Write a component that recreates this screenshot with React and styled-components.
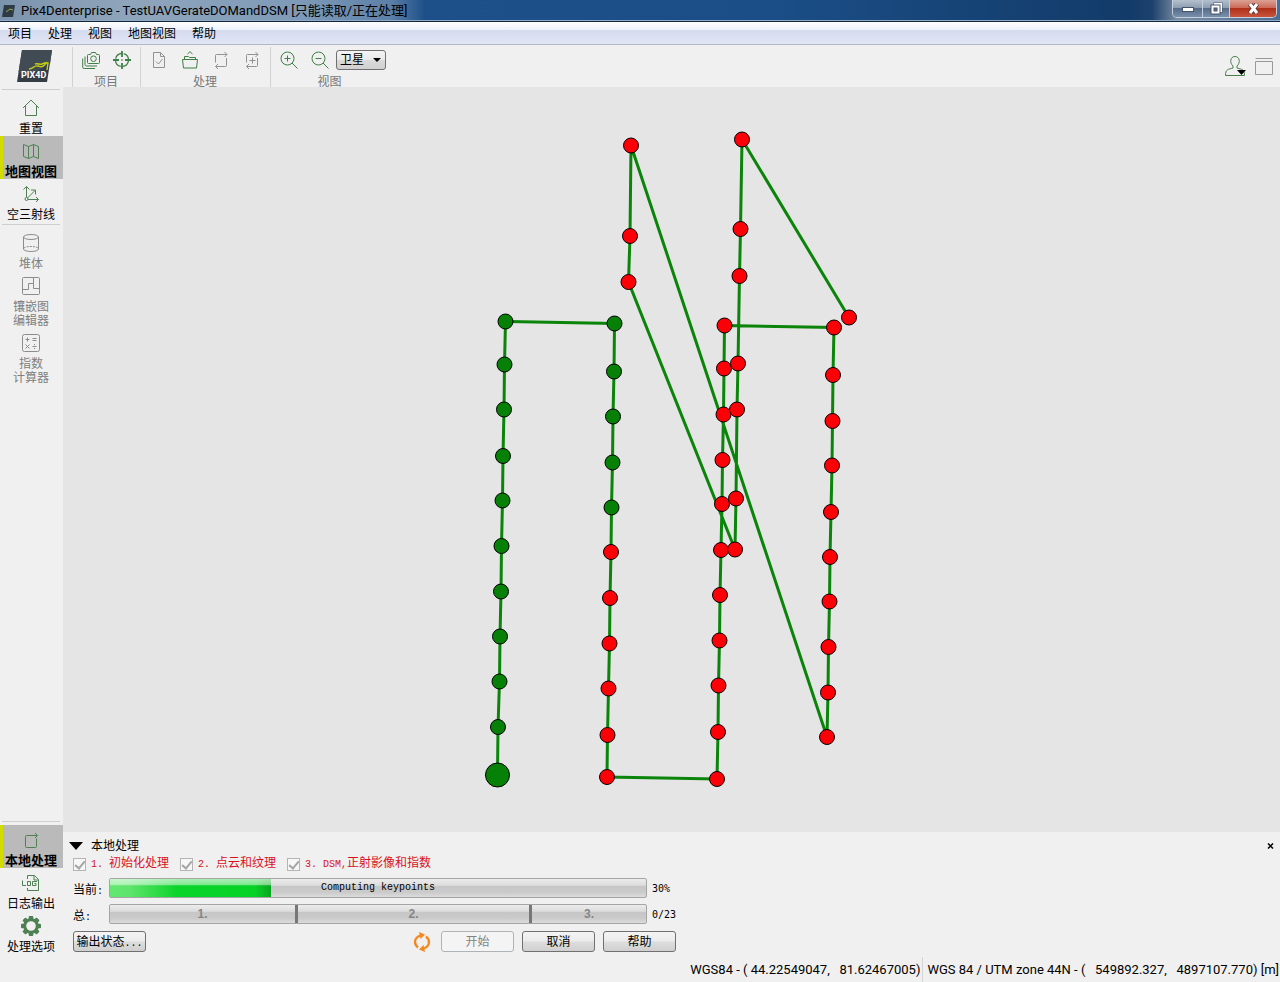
import React from "react";
import styled, { createGlobalStyle, css } from "styled-components";

const uiFont = css`
  font-family: Roboto, "Noto Sans CJK SC", sans-serif;
  font-size: 13px;
`;

const GlobalStyle = createGlobalStyle`
  * {
    box-sizing: border-box;
  }

  body {
    margin: 0;
    background: #f0f0f0;
    color: #000;
    font-family: "Liberation Sans", "Noto Sans CJK SC", sans-serif;
    font-size: 12px;
  }

  button, select, input {
    font: inherit;
    color: inherit;
    margin: 0;
  }
`;

const Window = styled.div`
  display: flex;
  flex-direction: column;
  height: 100vh;
`;

/* title bar */

const TitleBar = styled.header`
  display: flex;
  align-items: center;
  height: 22px;
  flex: none;
  padding: 0 3px 0 2px;
  gap: 6px;
  border-bottom: 1px solid #14263c;
  box-shadow: inset 0 -1px 0 #8fa9c6;
  background: linear-gradient(90deg, #7b93ad 0, #8fa5bb 130px, #7e9ab8 300px, #5d80a8 390px, #1d5088 425px, #1b4e87 60%, #123b69 88%, #1c416c 90%, #7b8da2 92%, #4b6c92 100%);
`;

const Title = styled.h1`
  ${uiFont}
  flex: 1;
  margin: 0;
  font-weight: 400;
  line-height: 20px;
  white-space: nowrap;
`;

const WindowButtons = styled.div`
  display: flex;
  align-self: flex-start;
  height: 18px;
  border: 1px solid #c4d0dd;
  border-top: 0;
  border-radius: 0 0 5px 5px;
  overflow: hidden;
`;

const WindowButton = styled.button`
  display: flex;
  align-items: center;
  justify-content: center;
  width: ${props => props.$width}px;
  padding: 0;
  border: 0;
  border-left: ${props => props.$first ? "0" : "1px solid #c4d0dd"};
  background: ${props => props.$close
    ? "linear-gradient(#dba193 0, #cb6a58 45%, #b02f19 50%, #c9553c 100%)"
    : "linear-gradient(#b5c0cd 0, #8e9eb1 45%, #566c88 50%, #7990ac 100%)"};
`;

/* menu bar */

const MenuBar = styled.nav`
  display: flex;
  align-items: center;
  flex: none;
  height: 23px;
  padding-top: 2px;
  border-bottom: 1px solid #b3b8c6;
  background: linear-gradient(#fdfeff 0, #eef2fa 34%, #d5dcef 38%, #e1e6f5 100%);
`;

const MenuItem = styled.button`
  padding: 0 8px;
  border: 0;
  background: none;
  line-height: 20px;
`;

/* toolbar */

const ToolBar = styled.div`
  display: flex;
  flex: none;
  height: 42px;
`;

const LogoBox = styled.div`
  width: 72px;
  padding: 5px 0 0 16px;
`;

const ToolGroup = styled.section`
  display: flex;
  flex-direction: column;
  align-items: center;
  gap: 5px;
  height: 40px;
  margin-top: 2px;
  padding: 3px 3px 0 2px;
  border-left: 1px solid #d2d2d2;
`;

const ToolRow = styled.div`
  display: flex;
  align-items: center;
  height: 20px;
`;

const ToolButton = styled.button`
  display: flex;
  align-items: center;
  justify-content: center;
  width: 31px;
  height: 20px;
  padding: 0 0 0 1px;
  border: 0;
  background: none;
  color: ${props => props.disabled ? "#929292" : "#3f7f45"};
`;

const GroupLabel = styled.span`
  color: #777;
  line-height: 14px;
`;

const MapSelect = styled.select`
  appearance: none;
  width: 50px;
  height: 20px;
  margin-left: 1px;
  padding: 0 3px;
  border: 1px solid #707070;
  border-radius: 3px;
  background:
    url("data:image/svg+xml,%3Csvg xmlns='http://www.w3.org/2000/svg' width='8' height='4'%3E%3Cpath d='M0 0h8L4 4z'/%3E%3C/svg%3E") no-repeat right 4px center,
    linear-gradient(#f4f4f4, #e9e9e9 50%, #dadada 52%, #d0d0d0);
`;

const AccountTools = styled.div`
  display: flex;
  align-items: center;
  gap: 8px;
  margin-left: auto;
  padding-right: 6px;
`;

const PlainButton = styled.button`
  display: flex;
  padding: 0;
  border: 0;
  background: none;
`;

/* side bar */

const Body = styled.div`
  display: flex;
  flex: 1;
  min-height: 0;
`;

const SideBar = styled.aside`
  display: flex;
  flex-direction: column;
  flex: none;
  width: 63px;
  padding-bottom: 3px;
`;

const Separator = styled.hr`
  width: 58px;
  height: 1px;
  margin: 2px 2px 3px;
  border: 0;
  background: #cfcfcf;
`;

const SideSpacer = styled.div`
  flex: 1;
`;

const SideItem = styled.button`
  display: flex;
  flex-direction: column;
  align-items: center;
  gap: 5px;
  padding: 6px 1px 0 0;
  border: 0;
  background: none;
  line-height: 14px;
  white-space: pre-line;
  color: ${props => props.disabled ? "#808080" : "#000"};

  svg {
    color: ${props => props.disabled ? "#8c8c8c" : "#4d8052"};
  }

  ${props => props.$active && css`
    background: linear-gradient(90deg, #d3dc00 3px, #bababa 3px);
    font-size: 13px;
    font-weight: 700;
  `}
`;

/* map and processing panel */

const Main = styled.main`
  display: flex;
  flex-direction: column;
  flex: 1;
  min-width: 0;
`;

const MapView = styled.div`
  flex: 1;
  min-height: 0;
  background: #e5e5e5;

  svg {
    display: block;
    width: 100%;
    height: 100%;
  }
`;

const Panel = styled.section`
  flex: none;
  padding: 6px 6px 5px;
`;

const PanelHeader = styled.div`
  display: flex;
  align-items: center;
  justify-content: space-between;
  height: 16px;
`;

const PanelTitle = styled.button`
  display: flex;
  align-items: center;
  gap: 8px;
  padding: 0;
  border: 0;
  background: none;
  line-height: 16px;
`;

const PanelContent = styled.div`
  max-width: 608px;
  padding-left: 4px;
`;

const Steps = styled.div`
  display: flex;
  gap: 11px;
  height: 14px;
  margin: 3px 0 7px;
`;

const Step = styled.label`
  display: flex;
  align-items: center;
  gap: 5px;
  color: #d8121c;
  line-height: 16px;
  white-space: pre;
`;

const Check = styled.input`
  appearance: none;
  display: grid;
  place-items: center;
  width: 13px;
  height: 13px;
  border: 1px solid #b4b4b4;
  background: #f7f7f7;

  &:checked::after {
    content: "";
    width: 4px;
    height: 8px;
    margin-bottom: 2px;
    border: solid #a5a5a5;
    border-width: 0 2px 2px 0;
    transform: rotate(40deg);
  }
`;

/* half-width latin beside 12px chinese glyphs */
const Mono = styled.span`
  font-family: "Liberation Mono", monospace;
  font-size: 10px;
`;

const ProgressRow = styled.div`
  display: grid;
  grid-template-columns: 36px 1fr 30px;
  align-items: center;
  height: 20px;
  margin-bottom: 6px;
  white-space: nowrap;
`;

const Bar = styled.div`
  display: grid;
  height: 20px;
  border: 1px solid #a5a5a5;
  border-radius: 2px;
  background: linear-gradient(#ececec 0, #dcdcdc 35%, #c6c6c6 42%, #cbcbcb 75%, #dcdcdc 100%);
`;

const BarFill = styled.div`
  grid-area: 1 / 1;
  background:
    linear-gradient(rgba(255, 255, 255, .65) 0, rgba(255, 255, 255, .5) 30%, transparent 38%),
    linear-gradient(90deg, #62e870 0, #5fe46d 12%, #0ad42a 42%, #06d226 90%, #08a51e 100%);
`;

const BarText = styled(Mono)`
  grid-area: 1 / 1;
  text-align: center;
  line-height: 18px;
`;

const SegmentBar = styled(Bar)`
  grid-template-columns: 188fr 234fr 114fr;
`;

const Segment = styled.span`
  border-right: ${props => props.$last ? "0" : "3px solid #777"};
  color: #858585;
  font-size: 12px;
  font-weight: 700;
  line-height: 18px;
  text-align: center;
`;

const BarValue = styled.span`
  padding-left: 5px;
  font-family: "DejaVu Sans Mono", monospace;
  font-size: 10px;
`;

const ButtonRow = styled.div`
  display: flex;
  align-items: center;
  gap: 8px;
  margin-top: 7px;
  padding-right: 1px;
`;

const Button = styled.button`
  width: 73px;
  height: 21px;
  padding: 1px 0 0;
  border: 1px solid #707070;
  border-radius: 3px;
  background: linear-gradient(#f4f4f4, #ebebeb 48%, #dddddd 52%, #d0d0d0);
  line-height: 18px;
  white-space: nowrap;

  &:disabled {
    border-color: #b0b3b5;
    background: #f4f4f4;
    color: #838383;
  }
`;

const Spinner = styled.span`
  display: flex;
  margin-left: auto;
  margin-right: 2px;
`;

const StatusBar = styled.footer`
  ${uiFont}
  display: flex;
  justify-content: flex-end;
  flex: none;
  height: 25px;
  padding-right: 1px;
  line-height: 25px;
  white-space: pre;
`;

const StatusItem = styled.span`
  & + & {
    margin-left: 2px;
    padding-left: 4px;
    border-left: 1px solid #d4d4d4;
  }
`;

const Icon = ({ children, size = 18 }) => (
  <svg width={size} height={size} viewBox="0 0 18 18" fill="none" stroke="currentColor" aria-hidden="true">
    {children}
  </svg>
);

const icons = {
  cameras: (
    <>
      <path d="M6.5 3.5h2l1-2h4l1 2h2q1 0 1 1v7q0 1-1 1h-10q-1 0-1-1v-7q0-1 1-1z" />
      <circle cx="11.5" cy="7.7" r="2.8" />
      <path d="M3 5.5v8q0 1.5 1.5 1.5H15M.7 7.5V16q0 1.5 1.5 1.5H13" />
    </>
  ),
  target: (
    <>
      <circle cx="9" cy="9" r="6.5" strokeDasharray="8.2 2" strokeDashoffset="-1" strokeWidth="1.3" />
      <path d="M9 0v6M9 12v6M0 9h6M12 9h6" strokeWidth="1.8" />
      <path d="M8 9h2" />
    </>
  ),
  fileCheck: <path d="M3.5 1.5h7l4 4v11h-11zM10.5 1.5v4h4M6 10.5l2.5 2.5 4-5" />,
  openBox: <path d="M1.5 8.5h15l-1 8.5h-13zM3.5 8V5.5h4l1 1h6V8M6.5 3L9 .7 11.5 3" />,
  loop: <path d="M3.5 11.5v-7q0-1 1-1H15M12.5 1l2.5 2.5L12.5 6M14.5 7v7.5q0 1-1 1H3.5M6 13l-2.5 2.5L6 18" />,
  loopPlus: <path d="M3.5 11.5v-7q0-1 1-1H15M12.5 1l2.5 2.5L12.5 6M14.5 7v7.5q0 1-1 1H3.5M6 13l-2.5 2.5L6 18M9.5 6.5v6M6.5 9.5h6" />,
  zoomIn: (
    <>
      <circle cx="7.5" cy="7.5" r="6.5" />
      <path d="M12 12l5.5 5.5M4.5 7.5h6M7.5 4.5v6" />
    </>
  ),
  zoomOut: (
    <>
      <circle cx="7.5" cy="7.5" r="6.5" />
      <path d="M12 12l5.5 5.5M4.5 7.5h6" />
    </>
  ),
  home: <path d="M1 9L9 1l8 8M3.5 7v9.5h11V7" />,
  map: <path d="M1.5 2.5l5 2 5-2 5 2v12l-5-2-5 2-5-2zM6.5 4.5v12M11.5 2.5v12" />,
  rays: (
    <>
      <circle cx="4.5" cy="14" r="1.5" />
      <path d="M4.5 12.5V1.5M1.5 4.5l3-3 3 3M6 14.5h10.5M14 12l2.5 2.5-2.5 2.5M5.5 13l7.5-7.5M9 5h4.5v4.5" />
    </>
  ),
  volume: (
    <>
      <ellipse cx="9" cy="3" rx="7.5" ry="2.5" />
      <path d="M1.5 3v12c0 3.3 15 3.3 15 0V3" />
      <path d="M2 14c2-2 12-2 14 0" strokeDasharray="2 1" />
    </>
  ),
  mosaic: <path d="M1.5.5h15q1 0 1 1v15q0 1-1 1h-15q-1 0-1-1v-15q0-1 1-1zM.5 12.5h6v-6h5V.5M11.5 6.5v5h6" />,
  calculator: (
    <>
      <rect x=".5" y=".5" width="17" height="17" rx="2" />
      <path d="M3.5 5.5h4M5.5 3.5v4M10.5 4.5h4M10.5 6.5h4M3.5 10.5l4 4M7.5 10.5l-4 4M10.5 12.5h4M12.5 10v1M12.5 14v1" />
    </>
  ),
  local: <path d="M10.5 4.5h-6q-1 0-1 1v10q0 1 1 1h9q1 0 1-1v-8M8 4.5h7.5M13 2l2.5 2.5L13 7" />,
  log: (
    <>
      <path d="M5.5 5V1.5h7l4 4v11h-11V14M12 1.5v4.5h4.5" />
      <path d="M.5 6.5v5h3.5M5.5 7.5h3v4h-3zM15 7.5h-4.5v4H14v-2h-1.5" />
    </>
  ),
};

const Gear = () => (
  <svg width="20" height="18" viewBox="-9 -9 18 18" overflow="visible" aria-hidden="true">
    {[0, 45, 90, 135].map(angle => (
      <rect key={angle} x="-2.3" y="-10" width="4.6" height="20" rx="1" fill="currentColor" transform={`rotate(${angle})`} />
    ))}
    <circle r="6.3" fill="#f0f0f0" stroke="currentColor" strokeWidth="3" />
  </svg>
);

const Logo = () => (
  <svg width="37" height="33" viewBox="0 0 37 33" aria-label="Pix4D">
    <path d="M6 0h30l-5 32H1z" fill="#343d46" />
    <path d="M6 0h30l-2 14L12 26 2.5 22z" fill="#414b54" />
    <path d="M13 19c4 0 5-4 9-3s4 2 9-4M19 14c3-1 5 1 7 0s3-2 6-1l-1 7" stroke="#c5cf10" strokeWidth="1.4" fill="none" />
    <text x="5" y="28" fill="#fff" fontFamily="Roboto, sans-serif" fontSize="9" fontWeight="700">PIX4D</text>
  </svg>
);

const AppIcon = () => (
  <svg width="13" height="14" viewBox="0 0 13 14" aria-hidden="true">
    <path d="M2 1h11l-2 12H0z" fill="#2d3b45" />
    <path d="M4 8l4-3 3 1" stroke="#9da955" fill="none" />
  </svg>
);

const UserIcon = () => (
  <svg width="22" height="22" viewBox="0 0 22 22" fill="none" aria-hidden="true">
    <path d="M8 13v-2C4.5 8 5 1.5 10 1.5S15.5 8 12 11v2c5 1.5 7.5 1 7.5 7.5H.5C.5 14 3 14.5 8 13z" stroke="#4a7d4e" />
    <path d="M12 15h9l-4.5 5z" fill="#000" />
  </svg>
);

const LayoutIcon = () => (
  <svg width="19" height="19" viewBox="0 0 19 19" fill="none" stroke="#999" aria-hidden="true">
    <path d="M.5 1.5h17M.5 4.5h17v13H.5z" />
  </svg>
);

const SyncIcon = () => (
  <svg width="18" height="20" viewBox="0 0 18 20" fill="none" stroke="#f5871f" strokeWidth="2.3" aria-hidden="true">
    <path d="M5 15.5C.5 12 1 6 7 3.5M13 4.5c4.5 3.5 4 9.5-2 12" />
    <path d="M6 0l6 2.5L7.5 7zM12 20l-6-2.5L10.5 13z" fill="#f5871f" stroke="none" />
  </svg>
);

// flight order of the images, [x, y, calibrated]
const images = [
  [497.5, 775, 1], [498, 727, 1], [499.5, 681.5, 1], [500, 636.5, 1], [501, 591.5, 1], [501.5, 546, 1],
  [502.5, 500.5, 1], [503, 456, 1], [504, 409.5, 1], [504.5, 364.5, 1], [505.5, 321.5, 1],
  [614.5, 323.5, 1], [614, 371.5, 1], [613, 416.5, 1], [612.5, 462.5, 1], [611.5, 507.5, 1],
  [611, 552], [610, 598], [609.5, 643.5], [608.5, 688.5], [607.5, 735], [607, 777],
  [717, 779], [718, 732], [718.5, 685.5], [719.5, 640.5], [720, 595], [721, 550], [722, 504],
  [722.5, 460], [723.5, 414.5], [724, 368.5], [724.5, 325.5],
  [834, 327.5], [833, 375], [832.5, 421], [832, 465.5], [831, 512], [830, 557], [829.5, 601.5],
  [828.5, 647], [828, 692.5], [827, 737],
  [631, 145.5], [630, 236], [628.5, 282],
  [735, 549.5], [736, 498.5], [737, 409.5], [738, 363.5], [739.5, 276], [740.5, 229], [742, 139.5],
  [849, 317.5],
];

const FlightMap = () => (
  <svg viewBox="63 87 1217 745" role="img" aria-label="地图视图">
    <polyline points={images.map(([x, y]) => `${x},${y}`).join(" ")} fill="none" stroke="#0a850a" strokeWidth="3" />
    {images.map(([x, y, calibrated], i) => (
      <circle key={i} cx={x} cy={y} r={i === 0 ? 12 : 7.5} fill={calibrated ? "#068006" : "#fb0007"} stroke="#000" strokeWidth="1" />
    ))}
  </svg>
);

const steps = [
  ["1. ", "初始化处理"],
  ["2. ", "点云和纹理"],
  ["3. DSM,", "正射影像和指数"],
];

export default function App() {
  const progress = 30;

  return (
    <Window>
      <GlobalStyle />
      <TitleBar>
        <AppIcon />
        <Title>Pix4Denterprise - TestUAVGerateDOMandDSM [只能读取/正在处理]</Title>
        <WindowButtons>
          <WindowButton $width={29} $first aria-label="最小化">
            <svg width="12" height="6"><rect x=".5" y="1.5" width="11" height="4" fill="#fff" stroke="#46546a" /></svg>
          </WindowButton>
          <WindowButton $width={27} aria-label="还原">
            <svg width="13" height="13" fill="none">
              <path d="M5 3V2h6v7h-1" stroke="#46546a" strokeWidth="3" />
              <path d="M5 3V2h6v7h-1" stroke="#fff" strokeWidth="2" />
              <rect x="2.5" y="4.5" width="6" height="6" stroke="#46546a" strokeWidth="4" />
              <rect x="2.5" y="4.5" width="6" height="6" stroke="#fff" strokeWidth="2" />
            </svg>
          </WindowButton>
          <WindowButton $width={47} $close aria-label="关闭">
            <svg width="13" height="11" fill="none">
              <path d="M3 1l7 9M10 1l-7 9" stroke="#5c3a3a" strokeWidth="5" />
              <path d="M3 1l7 9M10 1l-7 9" stroke="#fff" strokeWidth="3" />
            </svg>
          </WindowButton>
        </WindowButtons>
      </TitleBar>

      <MenuBar>
        <MenuItem>项目</MenuItem>
        <MenuItem>处理</MenuItem>
        <MenuItem>视图</MenuItem>
        <MenuItem>地图视图</MenuItem>
        <MenuItem>帮助</MenuItem>
      </MenuBar>

      <ToolBar>
        <LogoBox><Logo /></LogoBox>
        <ToolGroup>
          <ToolRow>
            <ToolButton aria-label="图像属性"><Icon>{icons.cameras}</Icon></ToolButton>
            <ToolButton aria-label="控制点"><Icon>{icons.target}</Icon></ToolButton>
          </ToolRow>
          <GroupLabel>项目</GroupLabel>
        </ToolGroup>
        <ToolGroup>
          <ToolRow>
            <ToolButton disabled aria-label="质量报告"><Icon>{icons.fileCheck}</Icon></ToolButton>
            <ToolButton aria-label="打开结果"><Icon>{icons.openBox}</Icon></ToolButton>
            <ToolButton disabled aria-label="重新优化"><Icon>{icons.loop}</Icon></ToolButton>
            <ToolButton disabled aria-label="重新匹配"><Icon>{icons.loopPlus}</Icon></ToolButton>
          </ToolRow>
          <GroupLabel>处理</GroupLabel>
        </ToolGroup>
        <ToolGroup>
          <ToolRow>
            <ToolButton aria-label="放大"><Icon>{icons.zoomIn}</Icon></ToolButton>
            <ToolButton aria-label="缩小"><Icon>{icons.zoomOut}</Icon></ToolButton>
            <MapSelect aria-label="底图">
              <option>卫星</option>
              <option>地图</option>
            </MapSelect>
          </ToolRow>
          <GroupLabel>视图</GroupLabel>
        </ToolGroup>
        <AccountTools>
          <PlainButton aria-label="用户"><UserIcon /></PlainButton>
          <PlainButton aria-label="布局"><LayoutIcon /></PlainButton>
        </AccountTools>
      </ToolBar>

      <Body>
        <SideBar>
          <Separator />
          <SideItem><Icon>{icons.home}</Icon>重置</SideItem>
          <SideItem $active><Icon>{icons.map}</Icon>地图视图</SideItem>
          <SideItem><Icon>{icons.rays}</Icon>空三射线</SideItem>
          <Separator />
          <SideItem disabled><Icon>{icons.volume}</Icon>堆体</SideItem>
          <SideItem disabled><Icon>{icons.mosaic}</Icon>{"镶嵌图\n编辑器"}</SideItem>
          <SideItem disabled><Icon>{icons.calculator}</Icon>{"指数\n计算器"}</SideItem>
          <SideSpacer />
          <Separator />
          <SideItem $active><Icon>{icons.local}</Icon>本地处理</SideItem>
          <SideItem><Icon>{icons.log}</Icon>日志输出</SideItem>
          <SideItem><Gear />处理选项</SideItem>
        </SideBar>

        <Main>
          <MapView><FlightMap /></MapView>
          <Panel>
            <PanelHeader>
              <PanelTitle>
                <svg width="14" height="8"><path d="M0 0h14L7 8z" /></svg>
                本地处理
              </PanelTitle>
              <PlainButton aria-label="关闭面板">
                <svg width="7" height="6" stroke="#000" strokeWidth="1.5"><path d="M1 .5l5 5M6 .5l-5 5" /></svg>
              </PlainButton>
            </PanelHeader>
            <PanelContent>
              <Steps>
                {steps.map(([latin, name]) => (
                  <Step key={name}>
                    <Check type="checkbox" defaultChecked disabled />
                    <span><Mono>{latin}</Mono>{name}</span>
                  </Step>
                ))}
              </Steps>
              <ProgressRow>
                <span>当前<Mono>:</Mono></span>
                <Bar role="progressbar" aria-label="当前" aria-valuenow={progress}>
                  <BarFill style={{ width: `${progress}%` }} />
                  <BarText>Computing keypoints</BarText>
                </Bar>
                <BarValue>{progress}%</BarValue>
              </ProgressRow>
              <ProgressRow>
                <span>总<Mono>:</Mono></span>
                <SegmentBar role="progressbar" aria-label="总" aria-valuenow={0} aria-valuemax={23}>
                  <Segment>1.</Segment>
                  <Segment>2.</Segment>
                  <Segment $last>3.</Segment>
                </SegmentBar>
                <BarValue>0/23</BarValue>
              </ProgressRow>
              <ButtonRow>
                <Button>输出状态<Mono>...</Mono></Button>
                <Spinner><SyncIcon /></Spinner>
                <Button disabled>开始</Button>
                <Button>取消</Button>
                <Button>帮助</Button>
              </ButtonRow>
            </PanelContent>
          </Panel>
        </Main>
      </Body>

      <StatusBar>
        <StatusItem>WGS84 - ( 44.22549047,   81.62467005)</StatusItem>
        <StatusItem>WGS 84 / UTM zone 44N - (   549892.327,   4897107.770) [m]</StatusItem>
      </StatusBar>
    </Window>
  );
}
